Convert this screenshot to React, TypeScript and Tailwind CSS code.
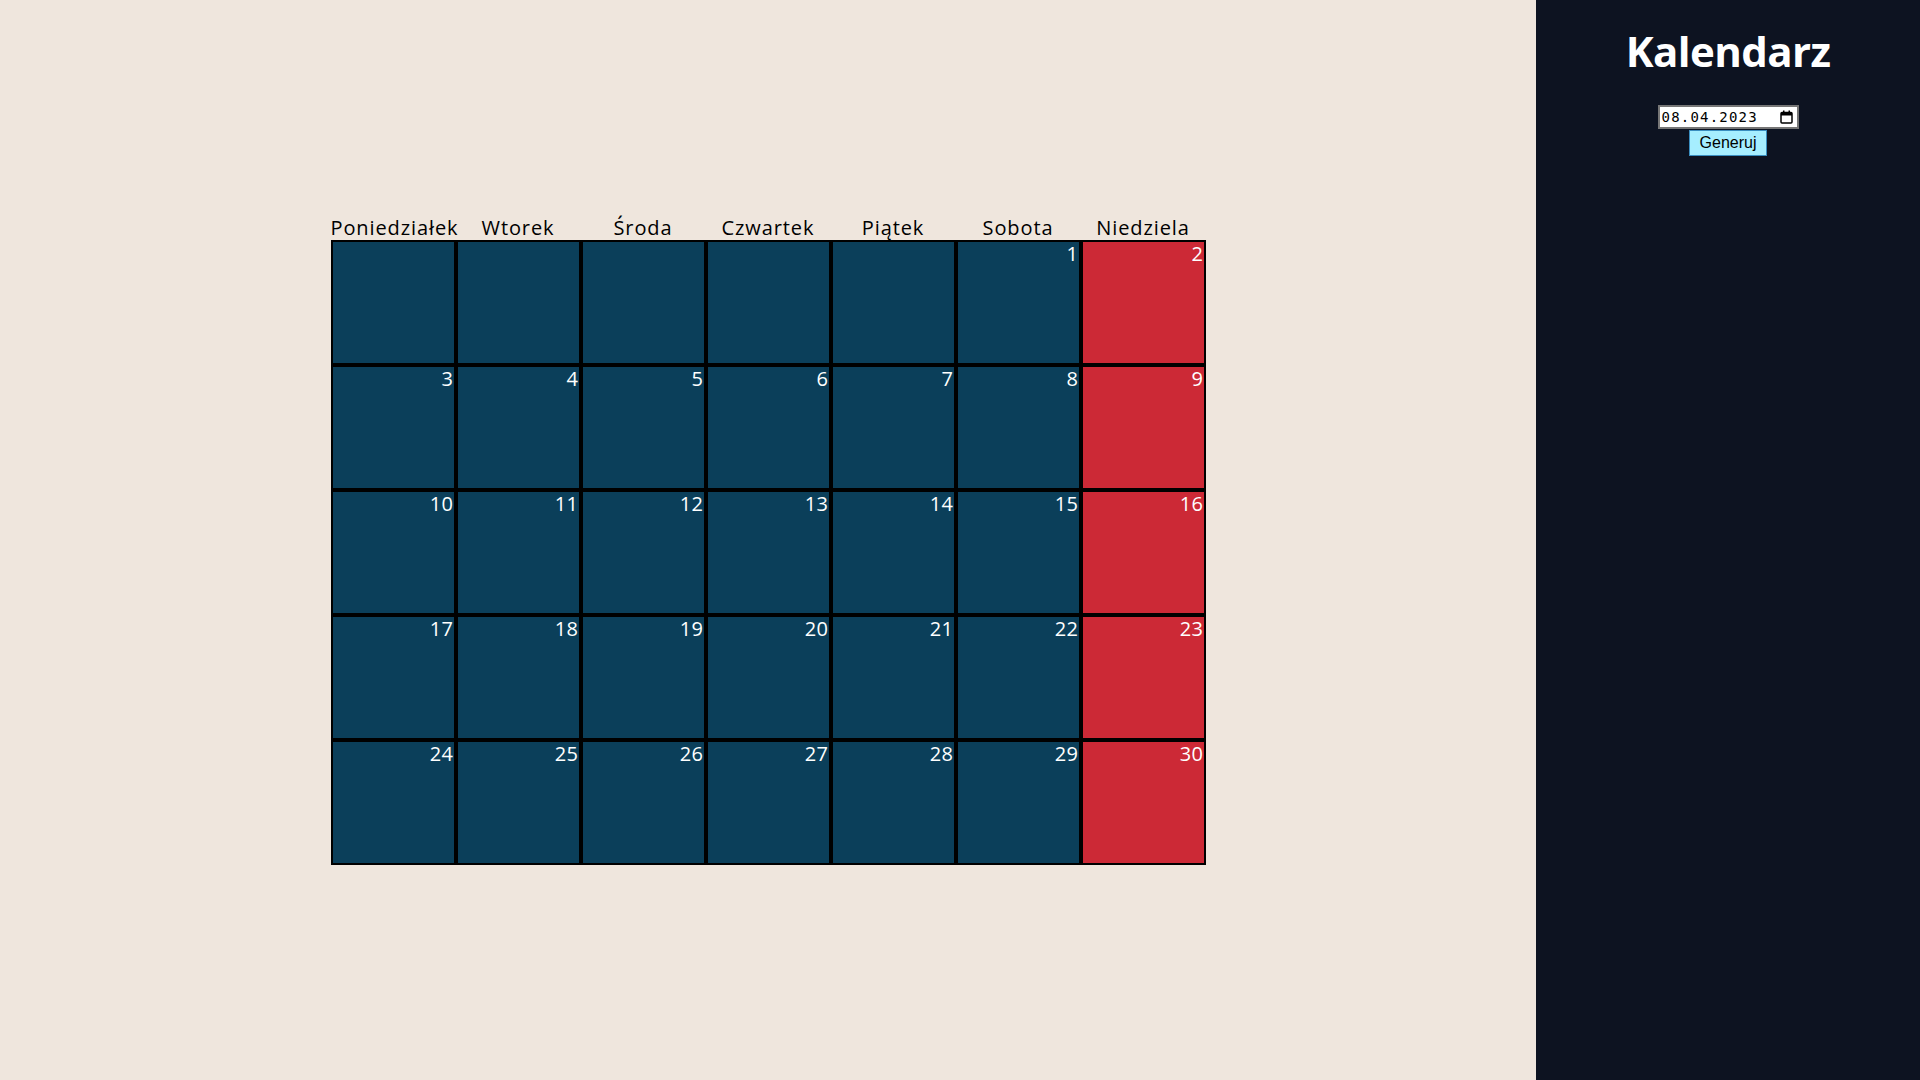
import React from "react";

const days = ["Poniedziałek", "Wtorek", "Środa", "Czwartek", "Piątek", "Sobota", "Niedziela"];

export default function App() {
  const cells: (number | null)[] = [null, null, null, null, null];
  for (let d = 1; d <= 30; d++) cells.push(d);
  return (
    <div className="flex w-full h-screen overflow-hidden" style={{ fontFamily: '"Open Sans", sans-serif' }}>
      <main className="flex-1 bg-[#efe6dd] flex items-center justify-center">
        <div className="flex flex-col">
          <div className="grid grid-cols-[repeat(7,125px)] h-[25px]">
            {days.map((d) => (
              <div key={d} className="text-center text-[20px] leading-[25px] tracking-[0.9px] text-black whitespace-nowrap">
                {d}
              </div>
            ))}
          </div>
          <div className="grid grid-cols-[repeat(7,125px)] grid-rows-[repeat(5,125px)]">
            {cells.map((c, i) => {
              const sunday = i % 7 === 6;
              return (
                <div
                  key={i}
                  className={`border-2 border-black text-right pr-0 text-white font-normal text-[20px] leading-6 tracking-[0.5px] ${
                    sunday ? "bg-[#cc2936]" : "bg-[#0b3f5a]"
                  }`}
                >
                  {c ?? ""}
                </div>
              );
            })}
          </div>
        </div>
      </main>
      <aside className="w-[384px] bg-[#0d1321] flex flex-col items-center pt-[27px]">
        <h1 className="text-white font-bold text-[42px] leading-[48px] tracking-[-0.6px]">Kalendarz</h1>
        <div className="mt-[30px] w-[141px] h-[24px] bg-white border-2 border-[#767676] flex items-center justify-between pl-[2px] pr-[4px]">
          <span className="text-[14px] tracking-[1.2px] text-black" style={{ fontFamily: '"DejaVu Sans Mono", monospace' }}>
            08.04.2023
          </span>
          <svg width="13" height="14" viewBox="0 0 13 14">
            <rect x="1" y="2.5" width="11" height="10.5" rx="1" fill="none" stroke="black" strokeWidth="1.5" />
            <rect x="1" y="2.5" width="11" height="3" fill="black" />
            <rect x="3" y="0.5" width="1.5" height="3" fill="black" />
            <rect x="8.5" y="0.5" width="1.5" height="3" fill="black" />
          </svg>
        </div>
        <button
          className="mt-[1px] h-[26px] px-[10px] bg-[#a6eeff] border border-[#3a8ec0] text-black text-[16px] leading-none"
          style={{ fontFamily: '"Liberation Sans", Arial, sans-serif' }}
        >
          Generuj
        </button>
      </aside>
    </div>
  );
}
